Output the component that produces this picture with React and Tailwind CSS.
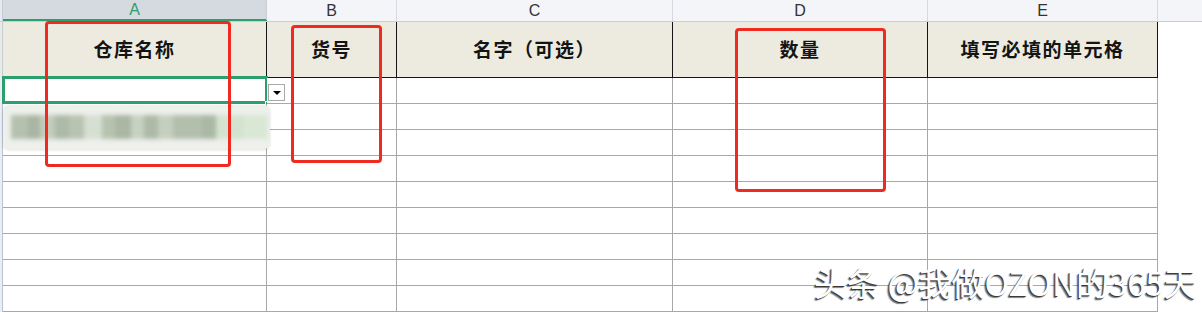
import React from "react";

const COLS = [
  { key: "A", width: "w-[264px]", title: "仓库名称" },
  { key: "B", width: "w-[130px]", title: "货号" },
  { key: "C", width: "w-[276px]", title: "名字（可选）" },
  { key: "D", width: "w-[255px]", title: "数量" },
  { key: "E", width: "w-[230px]", title: "填写必填的单元格" },
];

const ROWS = [1, 2, 3, 4, 5, 6, 7, 8, 9];

function LetterBar() {
  return (
    <div className="flex h-[22px] border-b border-[#c9ced6]">
      <div className="w-[3px] shrink-0 bg-[#e6eaf0] border-r border-[#c3cbd6]" />
      {COLS.map((col) =>
        col.key === "A" ? (
          <div
            key={col.key}
            className={`${col.width} shrink-0 flex items-center justify-center bg-[#d5d9e0] border-r border-[#c9ced6] border-b-2 border-b-[#2e9e6c] text-[16px] text-[#2e9e6c]`}
          >
            {col.key}
          </div>
        ) : (
          <div
            key={col.key}
            className={`${col.width} shrink-0 flex items-center justify-center bg-[#f3f5f8] border-r border-[#d6dae0] text-[16px] text-[#333]`}
          >
            {col.key}
          </div>
        )
      )}
      <div className="flex-1 bg-[#f3f5f8]" />
    </div>
  );
}

function HeaderRow() {
  return (
    <div className="flex h-[56px]">
      <div className="w-[3px] shrink-0 bg-[#ecebe1] border-r border-[#c3cbd6]" />
      {COLS.map((col) => (
        <div
          key={col.key}
          className={`${col.width} shrink-0 flex items-center justify-center bg-[#edebe0] border-r border-b border-[#151515] font-bold text-[19px] tracking-[1.5px] text-[#141414] [font-family:'Noto_Sans_CJK_SC',sans-serif]`}
        >
          {col.title}
        </div>
      ))}
      <div className="flex-1 bg-white" />
    </div>
  );
}

function DataRow({ index }) {
  return (
    <div className="flex h-[26px]">
      <div className="w-[3px] shrink-0 bg-[#eaeef4] border-r border-[#b9c3d1]" />
      {COLS.map((col) => (
        <div
          key={col.key}
          className={`${col.width} shrink-0 relative border-r border-b border-[#a8a8a8] bg-white`}
        >
          {index === 1 && col.key === "A" && (
            <>
              <div className="absolute -left-px -top-[2px] right-[-2px] bottom-[-1px] border-[3px] border-[#2ba06e]" />
              <div className="absolute right-[-4px] bottom-[-3px] w-[5px] h-[5px] bg-[#2ba06e] border border-white" />
            </>
          )}
        </div>
      ))}
      <div className="flex-1 bg-white" />
    </div>
  );
}

function BlurredList() {
  return (
    <div className="absolute left-[3px] top-[105px] w-[267px] h-[44px] rounded-[6px] bg-[#eef0ec] shadow-[0_1px_3px_rgba(0,0,0,0.12)] overflow-hidden">
      <div className="flex h-full items-center gap-0 pl-[8px] pr-[2px] blur-[2px]">
        <div className="h-[24px] w-[18px] bg-[#b5c0ae]" />
        <div className="h-[24px] w-[12px] bg-[#a9b6a3]" />
        <div className="h-[24px] w-[16px] bg-[#c3ccbc]" />
        <div className="h-[24px] w-[14px] bg-[#aebaa8]" />
        <div className="h-[24px] w-[16px] bg-[#b8c3b1]" />
        <div className="h-[24px] w-[18px] bg-[#d6dfd2]" />
        <div className="h-[24px] w-[14px] bg-[#b7c3b0]" />
        <div className="h-[24px] w-[16px] bg-[#a9b7a3]" />
        <div className="h-[24px] w-[14px] bg-[#c7d1c1]" />
        <div className="h-[24px] w-[14px] bg-[#adbaa7]" />
        <div className="h-[24px] w-[16px] bg-[#c5cfbf]" />
        <div className="h-[24px] w-[30px] bg-[#b3bfad]" />
        <div className="h-[24px] w-[14px] bg-[#aab8a4]" />
        <div className="h-[24px] w-[28px] bg-[#d3e3cf]" />
        <div className="h-[24px] w-[26px] bg-[#d9e7d5]" />
      </div>
    </div>
  );
}

function DropButton() {
  return (
    <div className="absolute left-[268px] top-[84px] w-[17px] h-[17px] bg-white border border-[#a8a8a8] flex items-center justify-center">
      <div className="w-0 h-0 border-l-[4px] border-r-[4px] border-t-[4px] border-l-transparent border-r-transparent border-t-black" />
    </div>
  );
}

export default function App() {
  return (
    <div className="relative w-[1202px] h-[312px] overflow-hidden bg-white [font-family:'Liberation_Sans',Arial,sans-serif]">
      <LetterBar />
      <HeaderRow />
      {ROWS.map((r) => (
        <DataRow key={r} index={r} />
      ))}

      <BlurredList />
      <DropButton />

      {/* red annotation boxes */}
      <div className="absolute left-[45px] top-[21px] w-[186px] h-[146px] rounded-[4px] border-[3px] border-[#ef2a21]" />
      <div className="absolute left-[291px] top-[25px] w-[91px] h-[138px] rounded-[4px] border-[3px] border-[#ef2a21]" />
      <div className="absolute left-[735px] top-[28px] w-[151px] h-[164px] rounded-[4px] border-[3px] border-[#ef2a21]" />

      {/* watermark */}
      <div className="absolute left-[814px] top-[266px] text-[33px] leading-none text-white [font-family:'Noto_Sans_CJK_SC',sans-serif] [text-shadow:-1px_1px_0_#3a3a3a,-2px_2px_1px_rgba(0,0,0,0.5)]">
        头条 @我做OZON的365天
      </div>
    </div>
  );
}
